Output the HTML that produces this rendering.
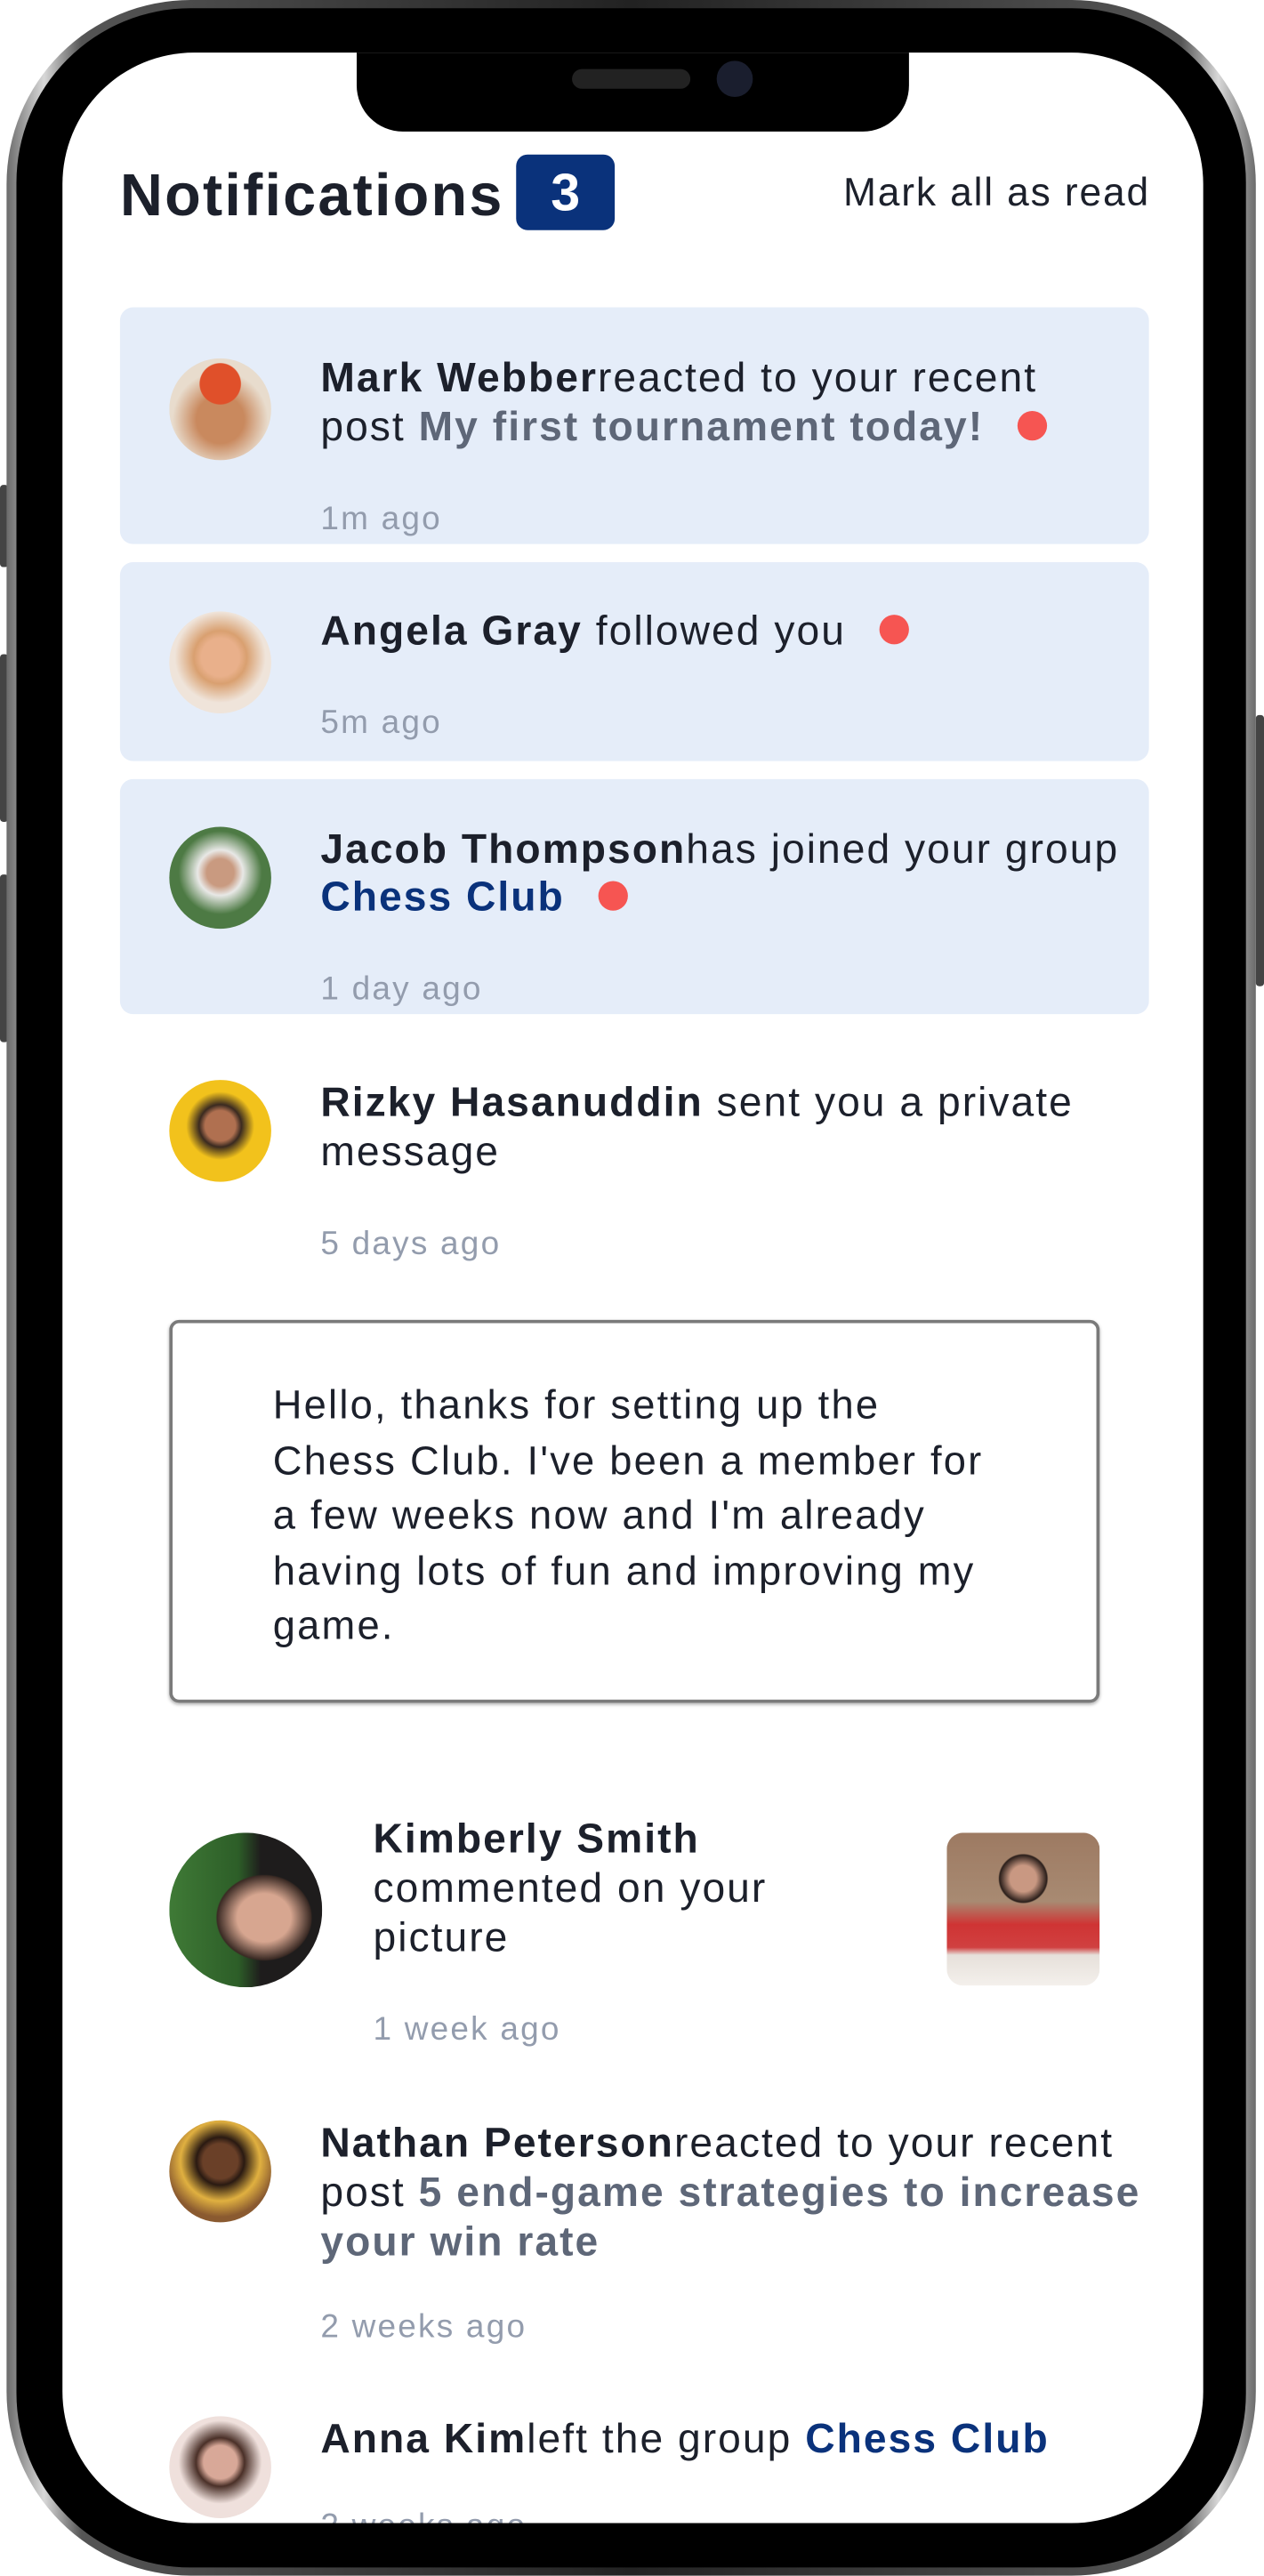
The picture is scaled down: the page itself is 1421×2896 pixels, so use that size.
<!DOCTYPE html>
<html><head><meta charset="utf-8">
<style>
html,body{margin:0;padding:0;background:#fff;width:1421px;height:2896px;overflow:hidden}
#w{position:absolute;left:0;top:0;width:769px;height:1567px;transform:scale(1.8479);transform-origin:0 0;font-family:"Liberation Sans",sans-serif}
.abs{position:absolute}
.frame{left:4px;top:0;width:760px;height:1567px;border-radius:112px;background:linear-gradient(90deg,#6b6b6b,#d8d8d8 3%,#555 6%,#222 50%,#555 94%,#d8d8d8 97%,#6b6b6b)}
.bezel{left:10px;top:5px;width:748px;height:1557px;border-radius:106px;background:#000}
.screen{left:38px;top:32px;width:694px;height:1503px;border-radius:80px;background:#fff;overflow:hidden}
.notch{left:179px;top:-10px;width:336px;height:58px;background:#000;border-radius:0 0 28px 28px}
.btn{background:#444;width:5px;border-radius:2px}
.t{position:absolute;white-space:nowrap;font-size:25px;line-height:30px;color:#1c202b;letter-spacing:1.1px}
b{font-weight:700;color:#1c202b}
.g{color:#5e6778;font-weight:700}
.c{color:#0a327b;font-weight:700}
.tm{position:absolute;font-size:20px;color:#939cad;white-space:nowrap;letter-spacing:1.2px}
.card{position:absolute;left:35px;width:626px;background:#e5edf9;border-radius:8px}
.av{position:absolute;width:62px;height:62px;border-radius:50%}
.dot{display:inline-block;width:18px;height:18px;border-radius:50%;background:#f65552;vertical-align:middle;margin-left:20px;position:relative;top:-2px}
</style></head><body><div id="w">
<div class="abs btn" style="left:0;top:295px;height:50px"></div>
<div class="abs btn" style="left:0;top:398px;height:102px"></div>
<div class="abs btn" style="left:0;top:532px;height:102px"></div>
<div class="abs btn" style="left:764px;top:435px;height:165px"></div>
<div class="abs frame"></div>
<div class="abs bezel"></div>
<div class="abs screen">
 <div class="abs notch"></div>
 <div class="abs" style="left:310px;top:10px;width:72px;height:12px;border-radius:6px;background:#222"></div>
 <div class="abs" style="left:398px;top:5px;width:22px;height:22px;border-radius:50%;background:#1a1e2e"></div>

 <div class="t" style="left:35px;top:64px;font-size:36px;line-height:46px;font-weight:700;letter-spacing:1.2px">Notifications</div>
 <div class="abs" style="left:276px;top:62px;width:60px;height:46px;background:#0a327b;border-radius:7px;color:#fff;font-weight:700;font-size:32px;line-height:46px;text-align:center">3</div>
 <div class="t" style="left:475px;top:71px;font-size:24px;letter-spacing:1px">Mark all as read</div>

 <div class="card" style="top:155px;height:144px"></div>
 <div class="av" style="left:65px;top:186px;background:radial-gradient(circle at 50% 25%,#e0502a 22%,transparent 23%),radial-gradient(circle at 50% 60%,#c9895e 30%,#e8dccd 60%)"></div>
 <div class="t" style="left:157px;top:183px"><b>Mark Webber</b>reacted to your recent</div>
 <div class="t" style="left:157px;top:213px">post <span class="g">My first tournament today!</span><span class="dot"></span></div>
 <div class="tm" style="left:157px;top:273px">1m ago</div>

 <div class="card" style="top:310px;height:121px"></div>
 <div class="av" style="left:65px;top:340px;background:radial-gradient(circle at 50% 45%,#e9b08b 25%,#d9a070 35%,#efe4da 60%)"></div>
 <div class="t" style="left:157px;top:337px"><b>Angela Gray</b> followed you<span class="dot"></span></div>
 <div class="tm" style="left:157px;top:397px">5m ago</div>

 <div class="card" style="top:442px;height:143px"></div>
 <div class="av" style="left:65px;top:471px;background:radial-gradient(circle at 50% 45%,#c99a80 18%,#e8e8e6 30%,#4d7a44 55%)"></div>
 <div class="t" style="left:157px;top:470px"><b>Jacob Thompson</b>has joined your group</div>
 <div class="t" style="left:157px;top:499px"><span class="c">Chess Club</span><span class="dot"></span></div>
 <div class="tm" style="left:157px;top:559px">1 day ago</div>

 <div class="av" style="left:65px;top:625px;background:radial-gradient(circle at 50% 45%,#b07050 20%,#3a2a20 28%,#f2c21c 45%)"></div>
 <div class="t" style="left:157px;top:624px"><b>Rizky Hasanuddin</b> sent you a private</div>
 <div class="t" style="left:157px;top:654px">message</div>
 <div class="tm" style="left:157px;top:714px">5 days ago</div>

 <div class="abs" style="left:65px;top:771px;width:562px;height:229px;border:2px solid #7a7a7a;border-radius:6px;box-shadow:0 1px 2px rgba(0,0,0,.3)"></div>
 <div class="t" style="left:128px;top:807px;line-height:33.6px;font-size:24.5px;letter-spacing:1.2px">Hello, thanks for setting up the<br>Chess Club. I've been a member for<br>a few weeks now and I'm already<br>having lots of fun and improving my<br>game.</div>

 <div class="av" style="left:65px;top:1083px;width:93px;height:94px;background:radial-gradient(ellipse at 62% 55%,#d7a690 20%,#3a2a24 35%,transparent 36%),linear-gradient(90deg,#3f7a36,#2d5e28 45%,#1e1c1c 60%)"></div>
 <div class="t" style="left:189px;top:1072px"><b>Kimberly Smith</b></div>
 <div class="t" style="left:189px;top:1102px">commented on your</div>
 <div class="t" style="left:189px;top:1132px">picture</div>
 <div class="abs" style="left:538px;top:1083px;width:93px;height:93px;border-radius:10px;background:radial-gradient(circle at 50% 30%,#c99882 10%,#2a1e1a 18%,transparent 19%),linear-gradient(180deg,#9d7a62 0%,#a88a72 45%,#cf3434 60%,#d04040 75%,#e6e0da 80%,#f4f0ec 100%)"></div>
 <div class="tm" style="left:189px;top:1192px">1 week ago</div>

 <div class="av" style="left:65px;top:1258px;background:radial-gradient(circle at 50% 40%,#6a4028 22%,#2a1a12 30%,#e0b040 50%,#8a5a30 70%)"></div>
 <div class="t" style="left:157px;top:1257px"><b>Nathan Peterson</b>reacted to your recent</div>
 <div class="t" style="left:157px;top:1287px">post <span class="g">5 end-game strategies to increase</span></div>
 <div class="t" style="left:157px;top:1317px"><span class="g">your win rate</span></div>
 <div class="tm" style="left:157px;top:1373px">2 weeks ago</div>

 <div class="av" style="left:65px;top:1438px;background:radial-gradient(circle at 50% 45%,#d8a898 22%,#4a3028 32%,#efe0dc 55%)"></div>
 <div class="t" style="left:157px;top:1437px"><b>Anna Kim</b>left the group <span class="c">Chess Club</span></div>
 <div class="tm" style="left:157px;top:1494px">2 weeks ago</div>
</div>
</div></body></html>
